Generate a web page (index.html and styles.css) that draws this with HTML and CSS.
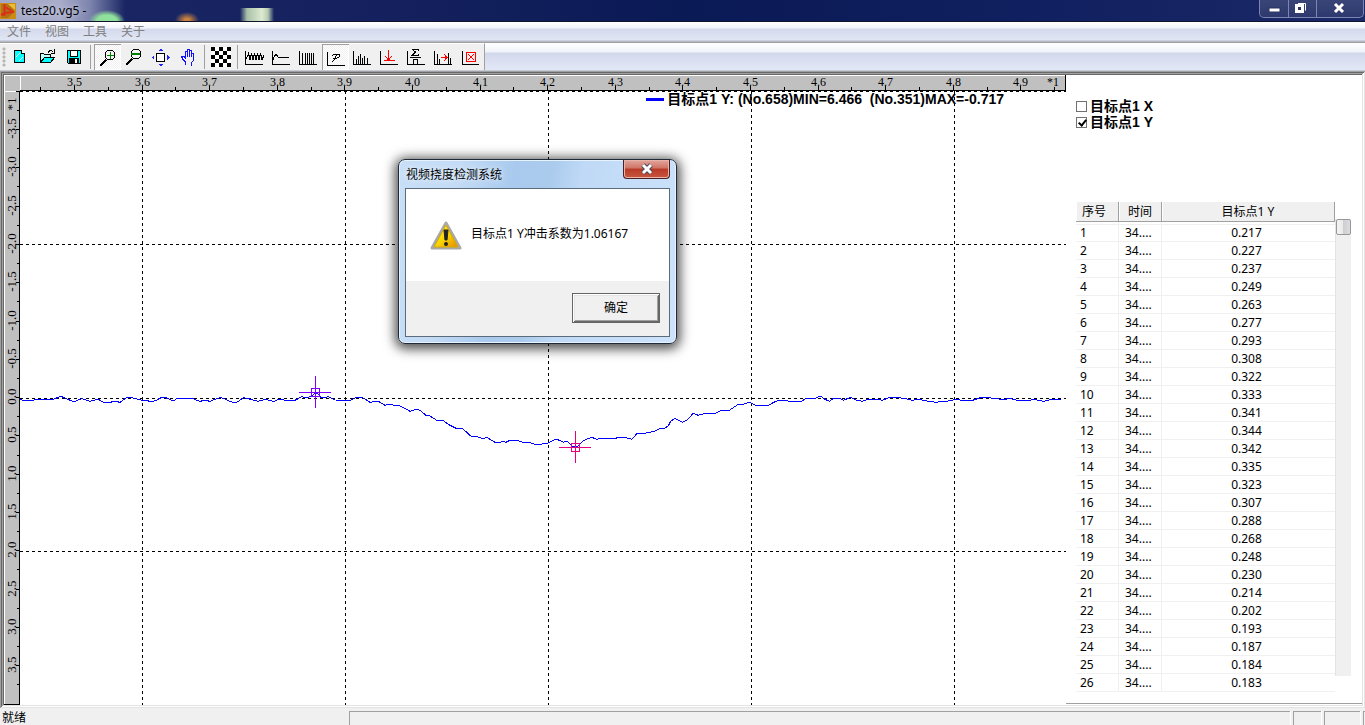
FILE: index.html
```html
<!DOCTYPE html>
<html lang="zh-CN">
<head>
<meta charset="utf-8">
<title>test20.vg5</title>
<link rel="stylesheet" href="styles.css">
</head>
<body>
<header class="titlebar">
  <svg class="app-icon" width="16" height="16" viewBox="0 0 16 16"><rect width="16" height="16" fill="#c98d14"/><path d="M1 1h7l7 7-7 7H1z" fill="#b56f14"/><path d="M8 1l7 6V1z" fill="#e8bd3c"/><path d="M4.500 1v12M1 12l4-2 9-1M5 4l7 4" stroke="#d8301c" stroke-width="2" fill="none"/></svg>
  <h1 class="title">test20.vg5 -</h1>
  <div class="window-buttons">
    <button class="win-btn" aria-label="最小化"><svg width="28" height="17"><rect x="9" y="8" width="11" height="4" fill="#fff" stroke="#2b3460"/></svg></button>
    <button class="win-btn" aria-label="还原"><svg width="27" height="17"><path d="M9 3.500h7.500v7" fill="none" stroke="#fff" stroke-width="1"/><rect x="7.500" y="5.500" width="6" height="6" fill="none" stroke="#fff" stroke-width="3"/><rect x="9" y="7" width="3" height="3" fill="#2b3460"/></svg></button>
    <button class="win-btn win-close" aria-label="关闭"><svg width="46" height="17"><path d="M18 4l8 8M26 4l-8 8" stroke="#fff" stroke-width="3"/></svg></button>
  </div>
</header>
<nav class="menubar">
  <button class="menu">文件</button><button class="menu">视图</button><button class="menu">工具</button><button class="menu">关于</button>
</nav>
<div class="rebar">
  <div class="toolbar" role="toolbar">
    <span class="grip"></span>
    <button class="tool" aria-label="新建"><svg viewBox="0 0 27 26"><path d="M8.500 6.500h7l3 3v9h-10z" fill="#0ff" stroke="#000"/><path d="M15.500 6.500v3h3" fill="#fff" stroke="#000"/><path d="M10 13l4-4M13 17l4-4" stroke="#fff"/></svg></button>
    <button class="tool" aria-label="打开"><svg viewBox="0 0 27 26"><path d="M7.500 17.500v-8h3l1 1h6v3" fill="#bff" stroke="#000"/><path d="M7.500 18.500l4-5h10l-4 5z" fill="#0ff" stroke="#000"/><path d="M15 9c1-3 3-3 5-1M21.500 5v4h-4" fill="none" stroke="#000"/></svg></button>
    <button class="tool" aria-label="保存"><svg viewBox="0 0 27 26"><path d="M7.500 6.500h13v13h-12l-1-1z" fill="#0ff" stroke="#000"/><path d="M10.500 7v5h7v-5" fill="#fff" stroke="#000"/><path d="M9 14h10v5H9z" fill="#000"/><path d="M15 15h2v4h-2z" fill="#fff"/></svg></button>
    <span class="sep"></span>
    <button class="tool pressed" aria-label="放大"><svg viewBox="0 0 27 26"><path d="M6 22l6-6" stroke="#000" stroke-width="2"/><circle cx="16" cy="11" r="5" fill="#f4f4f4" stroke="#000"/><path d="M13 11.500h7M16.500 8v7" stroke="#008000"/></svg></button>
    <button class="tool" aria-label="缩小"><svg viewBox="0 0 27 26"><path d="M5 21l6-6" stroke="#000" stroke-width="2"/><circle cx="15" cy="10" r="5" fill="#f4f4f4" stroke="#000"/><path d="M10 10h9" stroke="#008000" stroke-width="2"/></svg></button>
    <button class="tool" aria-label="适合窗口"><svg viewBox="0 0 27 26"><path d="M8.500 9.500h8v8h-8z" fill="#fff" stroke="#000"/><path d="M10 7l2.500-2.500L15 7zM10 20l2.500 2.500L15 20zM6 11l-2.500 2.500L6 16zM19 11l2.500 2.500L19 16z" fill="#22f"/></svg></button>
    <button class="tool" aria-label="平移"><svg viewBox="0 0 27 26"><path d="M10.500 21v-3l-3-3-1-3h2l2 2v-7h2v6v-8h2v8v-7h2v7v-4h2v7l-2 3v3" fill="none" stroke="#11f"/></svg></button>
    <span class="sep narrow"></span>
    <button class="tool" aria-label="标定板"><svg viewBox="0 0 27 26"><defs><pattern id="check" x="3" y="3" width="8" height="8" patternUnits="userSpaceOnUse"><rect width="8" height="8" fill="#fff"/><path d="M0 0h4v4H0zM4 4h4v4H4z"/></pattern></defs><rect x="3" y="3" width="20" height="20" fill="url(#check)"/></svg></button>
    <span class="sep narrow"></span>
    <button class="tool" aria-label="波形"><svg viewBox="0 0 27 26"><path class="ax" d="M4.500 7v13.500h17"/><path class="ln" d="M5 15l1-2 1.500-3.500 1.500 6 1.500-6 1.500 6 1.500-6 1.500 6 1.500-6 1.500 6 1.500-6 1.500 6 1-2v-3"/></svg></button>
    <button class="tool" aria-label="滤波"><svg viewBox="0 0 27 26"><path class="ax" d="M4.500 7v13.500h17"/><path class="ln" d="M5 16l1-3 2-3 2 3 2 1 1-1 1 1 1-1 1 1 1-1 1 1 1-1 1 1 1-1"/></svg></button>
    <button class="tool" aria-label="采样"><svg viewBox="0 0 27 26"><path class="ax" d="M4.500 7v13.500h17"/><path class="ln" d="M7.500 9v11M10.500 9v11M12.500 9v11M14.500 9v11M16.500 9v11M18.500 9v11"/></svg></button>
    <button class="tool pressed" aria-label="冲击系数"><svg viewBox="0 0 27 26"><path class="ax" d="M5.500 8v13.500h17"/><path class="ln" d="M10 18l2-2 3-6M10 12l2-2h5v3l-2 1h-4"/></svg></button>
    <button class="tool" aria-label="频谱"><svg viewBox="0 0 27 26"><path class="ax" d="M4.500 7v13.500h17"/><path class="ln" d="M7.500 15v5M9.500 12v8M11.500 10v10M13.500 14v6M15.500 12v8M18.500 14v6"/></svg></button>
    <button class="tool" aria-label="极值"><svg viewBox="0 0 27 26"><path class="ax" d="M4.500 7v13.500h17"/><path d="M12.500 6v10M9 12l3.500 4 3.500-4M8 16.500h11" fill="none" stroke="#f00"/></svg></button>
    <button class="tool" aria-label="平均"><svg viewBox="0 0 27 26"><path class="ax" d="M4.500 7v13.500h17"/><path class="ln" d="M15.500 7V5.500h-6l3 2.500-3 3h6V9.500M7 13.500h11M10.500 20v-4.500h4V20"/></svg></button>
    <button class="tool" aria-label="移位"><svg viewBox="0 0 27 26"><path class="ax" d="M4.500 7v13.500h17"/><path class="ln" d="M7.500 10v10M9.500 15v5M18.500 9v11M20.500 14v6"/><path d="M11 13.500h6M14 10l3 3.500-3 3.500" fill="none" stroke="#f00"/></svg></button>
    <button class="tool" aria-label="清除"><svg viewBox="0 0 27 26"><path class="ax" d="M5.500 7v13.500h16"/><path d="M9.500 8.500h9v9h-9zM11 10l6 6M17 10l-6 6" fill="none" stroke="#f00"/></svg></button>
  </div>
</div>
<main class="workspace">
  <section class="chart">
    <div class="corner"></div>
    <svg class="ruler-x" id="ruler-x"></svg>
    <svg class="ruler-y" id="ruler-y"></svg>
    <div class="plot-wrap">
      <svg class="plot" id="plot"></svg>
      <div class="legend"><span class="swatch"></span><span class="legend-text">目标点1 Y: (No.658)MIN=6.466&nbsp; (No.351)MAX=-0.717</span></div>
    </div>
    <div class="dialog" role="alertdialog" aria-labelledby="dlg-title">
      <div class="dialog-head">
        <h2 class="dialog-title" id="dlg-title">视频挠度检测系统</h2>
        <button class="dialog-close" aria-label="关闭"><svg width="14" height="12"><path d="M3 2l8 8M11 2l-8 8" stroke="#4a4a58" stroke-width="5"/><path d="M3 2l8 8M11 2l-8 8" stroke="#fff" stroke-width="3"/></svg></button>
      </div>
      <div class="dialog-body">
        <div class="message">
          <svg width="32" height="30" viewBox="0 0 32 30"><defs><linearGradient id="warn" x1="0" y1="0" x2="1" y2="1"><stop offset="0" stop-color="#fff36a"/><stop offset=".5" stop-color="#f8d800"/><stop offset="1" stop-color="#e58c00"/></linearGradient></defs><path d="M16 2L30 27H2z" fill="url(#warn)" stroke="#a9a9a9" stroke-width="3" stroke-linejoin="round"/><path d="M16 4L28 26H4z" fill="url(#warn)" stroke="#d9a800" stroke-width="1"/><path d="M14 9h4l-1 10h-2z" fill="#222" stroke="#222"/><circle cx="16" cy="23" r="2" fill="#222"/></svg>
          <p class="message-text">目标点1 Y冲击系数为1.06167</p>
        </div>
        <div class="actions"><button class="ok">确定</button></div>
      </div>
    </div>
  </section>
  <aside class="side">
    <div class="checks">
      <label class="check"><input type="checkbox">目标点1 X</label>
      <label class="check"><input type="checkbox" checked>目标点1 Y</label>
    </div>
    <div class="list">
      <table class="grid">
        <colgroup><col class="c-no"><col class="c-time"><col></colgroup>
        <thead><tr><th>序号</th><th>时间</th><th>目标点1 Y</th></tr></thead>
        <tbody id="rows"></tbody>
      </table>
      <div class="scrollbar"><div class="thumb"></div></div>
    </div>
  </aside>
</main>
<footer class="status">
  <span class="status-text">就绪</span>
  <span class="pane pane-main"></span><span class="pane pane-a"></span><span class="pane pane-b"></span><span class="pane pane-c"></span>
</footer>
<script src="script.js"></script>
</body>
</html>
```

FILE: styles.css
```css
* { box-sizing: border-box; }
body {
  margin: 0;
  height: 100vh;
  display: flex;
  flex-direction: column;
  overflow: hidden;
  background: #f0f0f0;
  color: #000;
  font: 12px/16px "Noto Sans", "Noto Sans CJK SC", sans-serif;
}
button { font: inherit; color: inherit; padding: 0; margin: 0; border: 0; background: none; }
h1, h2, p { margin: 0; font-size: 12px; font-weight: 400; }
svg { display: block; }

.titlebar {
  flex: none;
  height: 22px;
  display: flex;
  border-bottom: 1px solid #10132c;
  background:
    radial-gradient(ellipse 18px 11px at 107px 21px, #8fe09a 55%, transparent),
    radial-gradient(ellipse 12px 8px at 187px 20px, #c9813f 20%, transparent),
    linear-gradient(90deg, transparent 240px, #a9c0a8 247px, #dcebd2 262px, #b5c9b0 268px, transparent 274px) 0 8px no-repeat,
    linear-gradient(90deg, #a4a8c6 0, #a9adca 60px, #7d84ad 90px, transparent 125px),
    linear-gradient(90deg, #1c2867 0, #16225f 25%, #0a1a55 50%, #101f5f 75%, #1b2968 100%);
}
.app-icon { margin-top: 3px; }
.title { margin: 3px 0 0 5px; text-shadow: 0 0 5px #d5d8ea; }
.window-buttons {
  display: flex;
  height: 18px;
  margin: 0 1px 0 auto;
  border: 1px solid #7d86b0;
  border-top: 0;
  border-radius: 0 0 5px 5px;
  background: linear-gradient(#3a4577, #2d386e);
  overflow: hidden;
}
.win-btn + .win-btn { border-left: 1px solid #7d86b0; }

.menubar {
  flex: none;
  height: 20px;
  display: flex;
  gap: 14px;
  padding: 1px 0 0 7px;
  color: #808080;
  background: linear-gradient(#fff 0, #f2f4fa 6px, #d4daec 7px, #e1e6f5 18px, #b5b9c6 19px, #b5b9c6 20px);
}
.menu { height: 18px; }

.rebar {
  flex: none;
  height: 29px;
  border-top: 1px solid #a0a0a0;
  border-bottom: 1px solid #c6cbdc;
  background: linear-gradient(#fff 0, #f0f3fa 9px, #d2d8eb 10px, #e3e8f7 100%);
}
.toolbar {
  display: inline-flex;
  vertical-align: top;
  height: 27px;
  border-top: 1px solid #fff;
  border-right: 1px solid #a0a0a0;
  background: #f0f0f0;
}
.grip { width: 4px; margin: 3px 0 3px 2px; background: radial-gradient(circle, #b5b5b5 1px, transparent 2px) 0 0 / 4px 4px repeat-y; }
.tool { width: 27px; height: 26px; }
.tool svg { width: 27px; height: 26px; shape-rendering: crispEdges; }
.pressed {
  box-shadow: inset 1px 1px 0 #a0a0a0, inset -1px -1px 0 #fff;
  background: repeating-conic-gradient(#fff 0 25%, #f0f0f0 0 50%) 0 0 / 2px 2px;
}
.ax { fill: none; stroke: #000; }
.ln { fill: none; stroke: #000; }
.sep { width: 7px; background: linear-gradient(#a0a0a0, #a0a0a0) 3px 1px / 1px 24px no-repeat; }
.narrow { width: 6px; background-position: 2px 1px; }

.workspace {
  flex: 1;
  min-height: 0;
  display: flex;
  padding: 4px 3px 3px 4px;
  background: #fff;
  box-shadow: inset 1px 1px 0 #a0a0a0, inset -1px -1px 0 #e3e3e3, inset 2px 2px 0 #696969, inset -2px -2px 0 #fff, inset 3px 3px 0 #a0a0a0, inset -3px -3px 0 #e3e3e3, inset 4px 4px 0 #696969;
}
.chart {
  position: relative;
  flex: 1;
  min-width: 0;
  display: grid;
  grid-template: 16px 1fr / 16px 1fr;
}
.corner { background: #c0c0c0; border: solid #fff; border-width: 1px 0 0 1px; }
.ruler-x { width: 100%; height: 16px; background: #c0c0c0; border: solid #000; border-width: 0 1px 1px 0; box-shadow: inset 1px 1px 0 #fff; shape-rendering: crispEdges; }
.ruler-y { width: 16px; height: 100%; background: #c0c0c0; border: solid #000; border-width: 0 1px 1px 0; box-shadow: inset 1px 1px 0 #fff; shape-rendering: crispEdges; }
.ruler-x text { font: 12px "Liberation Serif", serif; text-anchor: middle; }
.ruler-y text { font: 13px "Liberation Serif", serif; text-anchor: middle; }
.ruler-x line, .ruler-y line { stroke: #000; }
.plot-wrap { position: relative; min-width: 0; min-height: 0; }
.plot { width: 100%; height: 100%; shape-rendering: crispEdges; }
.gridline { stroke: #000; stroke-dasharray: 3 3; }
.curve { fill: none; stroke: #00f; }
.mark { fill: none; }
.mark-max { stroke: #8000ff; }
.mark-min { stroke: #e6007e; }
.legend {
  position: absolute;
  top: 0;
  right: 62px;
  display: flex;
  align-items: center;
  gap: 3px;
  font: bold 14px/16px "Liberation Sans", "Noto Sans CJK SC", sans-serif;
  white-space: nowrap;
}
.swatch { width: 18px; height: 3px; background: #00f; }

.dialog {
  position: absolute;
  left: 394px;
  top: 84px;
  width: 279px;
  padding: 0 6px 6px;
  border: 1px solid #1f2937;
  border-radius: 7px;
  background: linear-gradient(100deg, #c8dff7 0, #c3dbf5 20%, #a9caee 38%, #abcbed 50%, #bfd9f6 60%, #cde3fb 100%);
  box-shadow: inset 0 0 0 1px #e6f2ff, 0 2px 12px 3px rgba(0, 0, 0, .7);
}
.dialog-head { height: 28px; display: flex; justify-content: space-between; align-items: flex-start; }
.dialog-title { padding: 7px 0 0 1px; text-shadow: 0 0 6px #fff; }
.dialog-close {
  width: 47px;
  height: 19px;
  display: flex;
  align-items: center;
  justify-content: center;
  border: 1px solid #4b2025;
  border-top: 0;
  border-radius: 0 0 4px 4px;
  background: linear-gradient(#e2a79d, #cf7465 45%, #b83a27 50%, #c9573f);
  box-shadow: inset 0 0 0 1px #e8b4aa;
}
.dialog-body { border: 1px solid #5c6b7a; background: #f0f0f0; }
.message { height: 92px; display: flex; gap: 9px; padding: 32px 0 0 24px; background: #fff; }
.message-text { padding-top: 5px; }
.actions { display: flex; justify-content: flex-end; padding: 12px 9px 13px; }
.ok {
  width: 88px;
  height: 30px;
  border: 1px solid #646464;
  box-shadow: inset 1px 1px 0 #fff, inset -1px -1px 0 #696969, inset 2px 2px 0 #e3e3e3, inset -2px -2px 0 #a0a0a0;
  background: #f0f0f0;
}

.side {
  width: 296px;
  display: flex;
  flex-direction: column;
  gap: 72px;
  margin-bottom: 1px;
  padding: 23px 11px 0 10px;
  border-bottom: 1px solid #a0a0a0;
}
.check {
  display: flex;
  align-items: center;
  gap: 3px;
  height: 16px;
  font: bold 14px/16px "Liberation Sans", "Noto Sans CJK SC", sans-serif;
}
.check input {
  appearance: none;
  position: relative;
  width: 11px;
  height: 11px;
  margin: 0;
  border: 1px solid #707070;
  background: #fff;
}
.check input:checked::after {
  content: "";
  position: absolute;
  left: 3px;
  top: 0;
  width: 3px;
  height: 6px;
  border: solid #000;
  border-width: 0 2px 2px 0;
  transform: rotate(40deg);
}
.list { display: flex; align-items: flex-start; }
.grid { flex: 1; table-layout: fixed; border-collapse: separate; border-spacing: 0; width: 100%; }
.c-no { width: 43px; }
.c-time { width: 43px; }
.grid th {
  height: 20px;
  padding: 1px 0 0;
  font-weight: 400;
  line-height: 18px;
  text-align: center;
  background: #f0f0f0;
  border: solid #a0a0a0;
  border-width: 0 1px 1px 0;
  box-shadow: inset 1px 0 0 #fff;
}
.grid th:first-child { padding-right: 6px; }
.grid td { height: 18px; padding: 0 0 0 6px; line-height: 17px; border-bottom: 1px solid #f0f0f0; border-right: 1px solid #f0f0f0; }
.grid tr:first-child td { height: 20px; padding-top: 2px; background: linear-gradient(#f0f0f0, #f0f0f0) 0 2px / 100% 1px no-repeat; }
.grid td:first-child { padding-left: 4px; }
.grid td:last-child { padding: 0 4px 0 0; text-align: center; border-right: 0; }
.grid tr:first-child td:last-child { padding-top: 2px; }
.scrollbar { width: 16px; height: 457px; margin-top: 17px; background: #f0f0f0; border-left: 1px solid #e3e3e3; }
.thumb { width: 15px; height: 16px; border: 1px solid #979797; border-radius: 2px; background: linear-gradient(90deg, #f4f4f4, #e8e8e8 50%, #cfcfd3 50%, #dcdce0); }

.status { flex: none; height: 17px; display: flex; gap: 3px; overflow: hidden; }
.status-text { width: 344px; margin: 3px 0 0 2px; line-height: 14px; }
.pane { margin-top: 3px; border: solid #a0a0a0; border-width: 1px 0 0 1px; box-shadow: 1px 0 0 #fff; }
.pane-main { flex: 1; }
.pane-a { width: 28px; }
.pane-b { width: 36px; }
.pane-c { width: 2px; }
```

FILE: script.js
```javascript
const NS = "http://www.w3.org/2000/svg";
function add(parent, name, attrs, text) {
  const el = document.createElementNS(NS, name);
  for (const key in attrs) el.setAttribute(key, attrs[key]);
  if (text) el.textContent = text;
  parent.appendChild(el);
}

const rx = document.getElementById("ruler-x");
const ry = document.getElementById("ruler-y");
const plot = document.getElementById("plot");

const stepX = 67.6;
for (let i = 0; i < 16; i++) {
  const m = Math.round(54 + (i - 0.5) * stepX) + 0.5;
  add(rx, "line", { x1: m, x2: m, y1: 12, y2: 15 });
  if (i === 15) break;
  const x = Math.round(54 + i * stepX) + 0.5;
  add(rx, "line", { x1: x, x2: x, y1: 11, y2: 15 });
  add(rx, "text", { x: x, y: 11 }, (3.5 + i * 0.1).toFixed(1));
}
add(rx, "text", { x: 1033, y: 11 }, "*1");

const stepY = 38.3;
for (let i = -1; i < 16; i++) {
  const y = Math.round(38 + i * stepY) + 0.5;
  add(ry, "line", { x1: 12, x2: 15, y1: y, y2: y });
  const m = Math.round(38 + (i - 0.5) * stepY) + 0.5;
  add(ry, "line", { x1: 13, x2: 15, y1: m, y2: m });
  const label = i === -1 ? "*1" : (-3.5 + i * 0.5).toFixed(1);
  const cy = i === -1 ? 13 : y - 1;
  if (i < 15) add(ry, "text", { x: 0, y: 0, transform: `translate(12 ${cy}) rotate(-90)` }, label);
}

add(plot, "line", { class: "gridline", x1: 0, x2: 1046, y1: 0.5, y2: 0.5 });
for (const y of [153.5, 307.5, 460.5]) add(plot, "line", { class: "gridline", x1: 0, x2: 1046, y1: y, y2: y });
for (const x of [122.5, 325.5, 528.5, 731.5, 934.5]) add(plot, "line", { class: "gridline", x1: x, x2: x, y1: 0, y2: 614 });

/* Samples in thirds of a pixel: [x offset of the segment, x/y pairs]. */
const segments = [
  [0, "0,89 10,91 40,91 50,88 100,88 115,82 122,79 130,82 140,86 155,93 165,94 175,90 187,86 200,91 210,94 222,91 235,88 250,97 270,97 285,94 300,97 312,88 320,83 335,83 350,87 368,91 380,92 398,95 410,90 425,82 435,82 448,88 460,93 470,86 520,86 530,91 540,94 555,91 570,94 585,88 600,83 610,85 625,92 643,99 655,94 670,83 685,86 700,90 715,94 738,88 750,92 762,94 775,88 800,91 825,91 845,80 860,84 875,78 885,70 895,72 903,84 925,80 945,90 990,91 1005,84 1020,82 1030,84 1050,97 1075,94 1095,106 1105,103 1139,108"],
  [380, "0,108 12,114 30,124 50,118 60,121 78,136 90,138 110,151 130,152 150,166 168,175 188,176 212,198 230,200 248,206 260,202 285,217 300,217 310,213 318,217 330,211 352,211 370,217 388,217 405,223 420,223 445,219 465,208 480,211 490,217 500,213 518,230 532,230 552,211 575,202 590,208 605,205 645,205 660,202 678,203 695,208 712,190 735,190 765,183 780,176 795,174 805,167 812,154 825,145 848,157 862,149 880,130 895,136 915,130 945,130 965,121 988,121 1015,103 1032,102 1048,96 1072,108 1085,106 1105,106 1125,95 1135,91"],
  [760, "0,91 15,91 27,94 65,94 77,85 100,87 122,78 135,88 148,94 160,85 178,85 190,91 212,82 225,89 247,94 265,88 295,88 308,91 328,82 348,83 375,85 395,91 415,88 440,93 470,97 485,94 500,94 530,88 545,91 578,91 605,82 625,82 640,86 675,88 690,85 710,91 750,91 762,88 790,94 812,89 843,88"]
];
const points = [];
for (const [x0, data] of segments) {
  for (const pair of data.split(" ")) {
    const [x, y] = pair.split(",").map(Number);
    points.push(`${(x0 + x / 3).toFixed(1)},${(279 + y / 3).toFixed(1)}`);
  }
}
add(plot, "polyline", { class: "curve", points: points.join(" ") });

function mark(cls, x, y) {
  add(plot, "path", { class: "mark " + cls, d: `M${x - 16.5} ${y}h32M${x} ${y - 16.5}v32M${x - 4} ${y - 4}h8v8h-8z` });
}
mark("mark-max", 295.5, 301.5);
mark("mark-min", 555.5, 356.5);

const values = ["0.217", "0.227", "0.237", "0.249", "0.263", "0.277", "0.293", "0.308", "0.322", "0.333", "0.341", "0.344", "0.342", "0.335", "0.323", "0.307", "0.288", "0.268", "0.248", "0.230", "0.214", "0.202", "0.193", "0.187", "0.184", "0.183"];
document.getElementById("rows").innerHTML = values
  .map((v, i) => `<tr><td>${i + 1}</td><td>34....</td><td>${v}</td></tr>`)
  .join("");
```
